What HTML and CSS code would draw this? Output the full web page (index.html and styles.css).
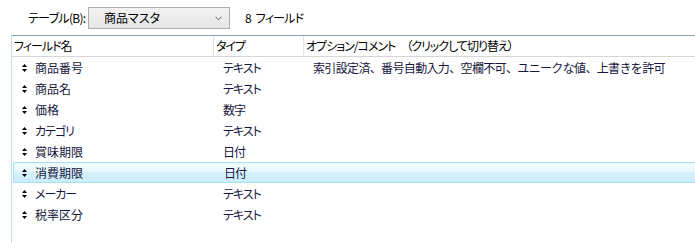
FILE: index.html
```html
<!DOCTYPE html>
<html lang="ja">
<head>
<meta charset="utf-8">
<link rel="stylesheet" href="styles.css">
</head>
<body>
<div class="toolbar">
  <span class="label">テーブル(B):</span>
  <div class="combo">
    <span class="combo-text">商品マスタ</span>
    <svg class="chev" width="7" height="5" viewBox="0 0 7 5"><path d="M0.5 0.8 L3.5 3.8 L6.5 0.8" fill="none" stroke="#606060" stroke-width="1"/></svg>
  </div>
  <span class="count">8 フィールド</span>
</div>
<div class="list">
  <div class="head">
    <div class="hcell">フィールド名</div>
    <div class="hcell">タイプ</div>
    <div class="hcell last">オプション/コメント　（クリックして切り替え）</div>
  </div>
  <div class="rows">
    <div class="row"><div class="c name"><svg class="mv" width="5" height="8" viewBox="0 0 5 8"><path d="M2.5 0 L5 3 L0 3 Z M0 5 L5 5 L2.5 8 Z" fill="#000"/></svg>商品番号</div><div class="c type">テキスト</div><div class="c opt">索引設定済、番号自動入力、空欄不可、ユニークな値、上書きを許可</div></div>
    <div class="row"><div class="c name"><svg class="mv" width="5" height="8" viewBox="0 0 5 8"><path d="M2.5 0 L5 3 L0 3 Z M0 5 L5 5 L2.5 8 Z" fill="#000"/></svg>商品名</div><div class="c type">テキスト</div><div class="c opt"></div></div>
    <div class="row"><div class="c name"><svg class="mv" width="5" height="8" viewBox="0 0 5 8"><path d="M2.5 0 L5 3 L0 3 Z M0 5 L5 5 L2.5 8 Z" fill="#000"/></svg>価格</div><div class="c type">数字</div><div class="c opt"></div></div>
    <div class="row"><div class="c name k"><svg class="mv" width="5" height="8" viewBox="0 0 5 8"><path d="M2.5 0 L5 3 L0 3 Z M0 5 L5 5 L2.5 8 Z" fill="#000"/></svg>カテゴリ</div><div class="c type">テキスト</div><div class="c opt"></div></div>
    <div class="row"><div class="c name"><svg class="mv" width="5" height="8" viewBox="0 0 5 8"><path d="M2.5 0 L5 3 L0 3 Z M0 5 L5 5 L2.5 8 Z" fill="#000"/></svg>賞味期限</div><div class="c type">日付</div><div class="c opt"></div></div>
    <div class="row hover"><div class="c name"><svg class="mv" width="5" height="8" viewBox="0 0 5 8"><path d="M2.5 0 L5 3 L0 3 Z M0 5 L5 5 L2.5 8 Z" fill="#000"/></svg>消費期限</div><div class="c type">日付</div><div class="c opt"></div></div>
    <div class="row"><div class="c name k"><svg class="mv" width="5" height="8" viewBox="0 0 5 8"><path d="M2.5 0 L5 3 L0 3 Z M0 5 L5 5 L2.5 8 Z" fill="#000"/></svg>メーカー</div><div class="c type">テキスト</div><div class="c opt"></div></div>
    <div class="row"><div class="c name"><svg class="mv" width="5" height="8" viewBox="0 0 5 8"><path d="M2.5 0 L5 3 L0 3 Z M0 5 L5 5 L2.5 8 Z" fill="#000"/></svg>税率区分</div><div class="c type">テキスト</div><div class="c opt"></div></div>
  </div>
</div>
</body>
</html>
```
FILE: styles.css
```css
html, body {
  margin: 0;
  padding: 0;
  background: #ffffff;
}
body {
  width: 695px;
  height: 243px;
  overflow: hidden;
  font-family: "Noto Sans CJK JP", "Noto Sans", sans-serif;
  font-size: 12px;
  font-feature-settings: "palt";
  color: #000;
}
.toolbar {
  height: 35px;
  display: flex;
  align-items: center;
  padding-left: 28px;
  box-sizing: border-box;
}
.label {
  width: 60px;
  flex: none;
  white-space: nowrap;
  line-height: 16px;
  letter-spacing: -0.7px;
}
.combo {
  width: 142px;
  height: 22px;
  flex: none;
  box-sizing: border-box;
  border: 1px solid #acacac;
  background: linear-gradient(#f2f2f2, #e6e6e6);
  display: flex;
  align-items: center;
  padding-left: 15px;
  padding-right: 7px;
  margin-top: 1px;
}
.combo-text {
  flex: 1;
  line-height: 16px;
  white-space: nowrap;
}
.chev {
  display: block;
}
.count {
  margin-left: 15px;
  line-height: 16px;
  white-space: nowrap;
  letter-spacing: -0.8px;
  word-spacing: 3px;
}
.list {
  margin-left: 11px;
  border-left: 1px solid #c5dced;
  border-top: 1px solid #7fa6c6;
  height: 208px;
}
.head {
  display: grid;
  grid-template-columns: 202px 90px 1fr;
  height: 20px;
  border-bottom: 1px solid #d5d5d5;
}
.hcell {
  border-right: 1px solid #e3e3e3;
  line-height: 20px;
  padding-left: 2px;
  white-space: nowrap;
  overflow: hidden;
  letter-spacing: -1px;
}
.hcell.last {
  border-right: none;
}
.row {
  display: grid;
  grid-template-columns: 202px 90px 1fr;
  height: 21px;
  box-sizing: border-box;
  color: #161640;
  margin-left: 1px;
}
.row.hover {
  border: 1px solid #a8dff6;
  border-right: none;
  border-radius: 2px 0 0 2px;
  background: linear-gradient(#f0fafe 0%, #eaf8fe 45%, #d4f1fc 50%, #cbedfb 100%);
}
.c {
  line-height: 21px;
  white-space: nowrap;
  overflow: hidden;
}
.row.hover .c {
  line-height: 19px;
}
.name {
  display: flex;
  align-items: center;
  padding-left: 9px;
}
.name.k {
  letter-spacing: -1px;
}
.row.hover .name {
  padding-left: 8px;
}
.mv {
  display: block;
  margin-right: 8px;
  flex: none;
}
.type {
  padding-left: 8px;
  letter-spacing: -1px;
}
.opt {
  padding-left: 8px;
  font-feature-settings: normal;
  letter-spacing: -0.65px;
}
```
